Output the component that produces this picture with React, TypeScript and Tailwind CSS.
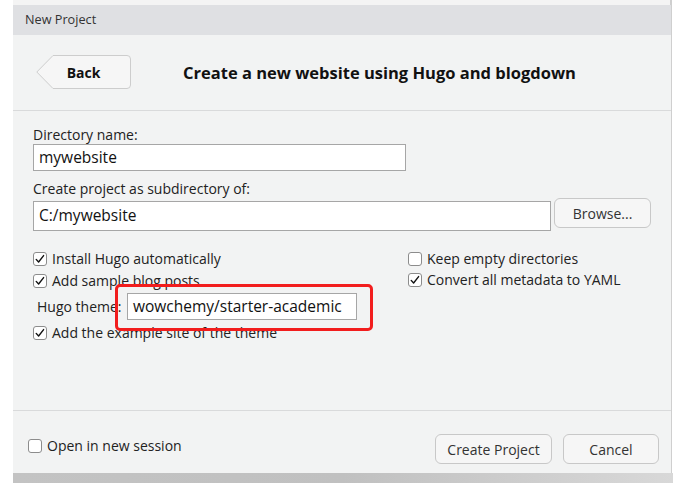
import React from "react";

const font = { fontFamily: '"Open Sans", "Noto Sans", sans-serif' };

function Check({ checked }: { checked: boolean }) {
  return (
    <span className="w-[14px] h-[14px] rounded-[3px] border border-[#8c8c8c] bg-white flex items-center justify-center shrink-0">
      {checked && (
        <svg width="12" height="12" viewBox="0 0 12 12">
          <path d="M2.2 6.4 L4.6 9 L9.6 2.6" fill="none" stroke="#111" strokeWidth="1.4" strokeLinecap="round" strokeLinejoin="round" />
        </svg>
      )}
    </span>
  );
}

function CheckRow({ checked, label, className = "" }: { checked: boolean; label: string; className?: string }) {
  return (
    <div className={"flex items-center h-[20px] gap-[5px] " + className}>
      <Check checked={checked} />
      <span className="text-[14px] text-[#222] leading-[20px] whitespace-nowrap">{label}</span>
    </div>
  );
}

export default function App() {
  return (
    <div className="w-[681px] h-[491px] bg-white overflow-hidden relative" style={font}>
      <div className="ml-[13px] w-[659px] h-[5px] bg-[#f4f4f4] border-r-[2px] border-[#cfcfcf]" />
      <div className="ml-[13px] w-[659px] flex flex-col border-r border-[#cfcfcf]">
        <div className="h-[30px] bg-[#dfe0e3] pl-[12px] flex items-center text-[12.7px] text-[#333]">New Project</div>
        <div className="h-[438px] bg-[#f2f3f3] flex flex-col">
          {/* header */}
          <div className="h-[76px] border-b border-[#d9dadb] flex items-start pt-[20px] pl-[23px]">
            <div className="relative w-[95px] h-[34px] flex items-center justify-center">
              <svg className="absolute inset-0" width="95" height="34" viewBox="0 0 95 34">
                <path d="M17 0.5 H91 Q94.5 0.5 94.5 4 V30 Q94.5 33.5 91 33.5 H17 L0.8 17 Z" fill="#f6f6f6" stroke="#cdcdcd" strokeWidth="1" />
              </svg>
              <span className="relative text-[14px] font-bold text-[#111]">Back</span>
            </div>
            <div className="ml-[52px] h-[37px] flex items-center text-[16.5px] font-bold text-[#111] whitespace-nowrap">
              Create a new website using Hugo and blogdown
            </div>
          </div>
          {/* form */}
          <div className="h-[300px] border-b border-[#d9dadb] relative px-[20px] pt-[14px]">
            <div className="text-[14px] leading-[20px] text-[#222]">Directory name:</div>
            <div className="-mt-[1px] w-[373px] h-[27px] bg-white border border-[#a6a6a6] flex items-center px-[5px] text-[15.5px] text-[#111]">mywebsite</div>
            <div className="mt-[8px] text-[14px] leading-[20px] text-[#222]">Create project as subdirectory of:</div>
            <div className="-mt-[1px] flex h-[33px] gap-[3px]">
              <div className="self-end w-[519px] h-[30px] bg-white border border-[#a6a6a6] flex items-center px-[5px] text-[15.5px] text-[#111]">C:/mywebsite</div>
              <div className="self-start w-[97px] h-[30px] rounded-[6px] bg-[#f6f6f6] border border-[#c8c8c8] flex items-center justify-center text-[14px] text-[#333]">Browse...</div>
            </div>
            <div className="mt-[18px] flex">
              <div className="w-[375px] flex flex-col">
                <CheckRow checked label="Install Hugo automatically" />
                <CheckRow checked label="Add sample blog posts" className="mt-[2px]" />
                <div className="mt-[2px] h-[27px] flex items-center pl-[4px]">
                  <span className="w-[90px] text-[14px] text-[#222] whitespace-nowrap">Hugo theme:</span>
                  <div className="w-[230px] h-[27px] bg-white border border-[#a6a6a6] flex items-center px-[5px] text-[15.5px] text-[#111] whitespace-nowrap">wowchemy/starter-academic</div>
                </div>
                <CheckRow checked label="Add the example site of the theme" className="mt-[3px]" />
              </div>
              <div className="flex flex-col">
                <CheckRow checked={false} label="Keep empty directories" />
                <CheckRow checked label="Convert all metadata to YAML" className="mt-[1px]" />
              </div>
            </div>
            <div className="absolute left-[102px] top-[173px] w-[258px] h-[47px] border-[3px] border-[#f21d1d] rounded-[5px]" />
          </div>
          {/* footer */}
          <div className="flex-1 flex items-start justify-between pl-[15px] pr-[12px]">
            <CheckRow checked={false} label="Open in new session" className="mt-[25px]" />
            <div className="mt-[23px] flex gap-[11px]">
              <div className="w-[117px] h-[30px] rounded-[6px] bg-[#f6f6f6] border border-[#c8c8c8] flex items-center justify-center text-[14px] text-[#333]">Create Project</div>
              <div className="w-[96px] h-[30px] rounded-[6px] bg-[#f6f6f6] border border-[#c8c8c8] flex items-center justify-center text-[14px] text-[#333]">Cancel</div>
            </div>
          </div>
        </div>
      </div>
      <div className="ml-[13px] w-[660px] h-[10px] bg-gradient-to-r from-[#c3c3c3] via-[#c0c0c0] to-[#d8d8d8]" />
    </div>
  );
}
